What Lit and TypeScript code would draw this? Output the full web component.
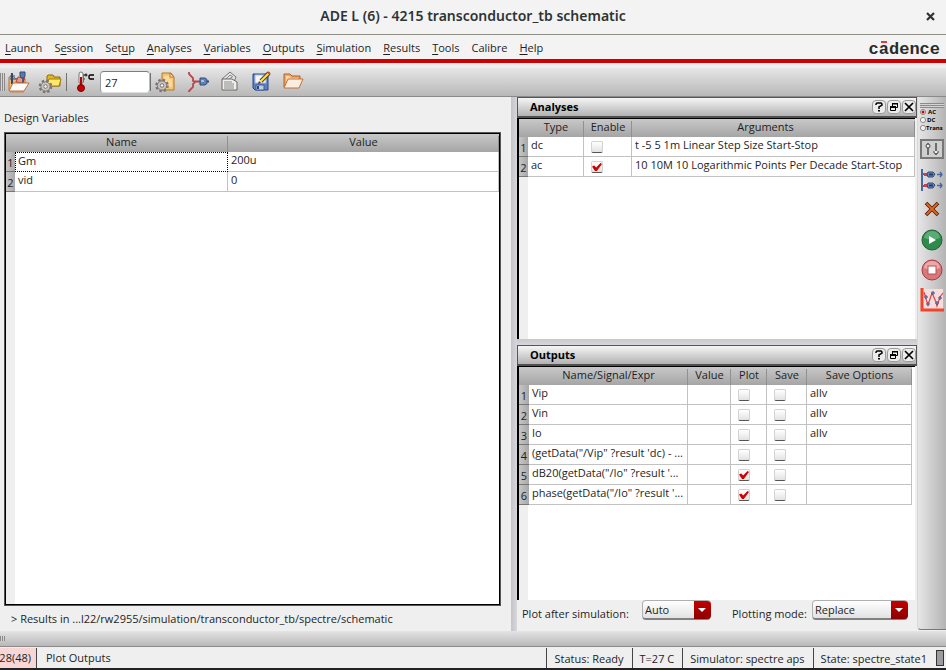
import { LitElement, html, css, svg, nothing } from "lit";
import { customElement } from "lit/decorators.js";

interface Analysis {
  type: string;
  enabled: boolean;
  args: string;
}

interface Output {
  name: string;
  plot: boolean;
  save: boolean;
  options: string;
}

const menus: [string, string, string][] = [
  ["", "L", "aunch"],
  ["S", "e", "ssion"],
  ["Set", "u", "p"],
  ["", "A", "nalyses"],
  ["", "V", "ariables"],
  ["", "O", "utputs"],
  ["", "S", "imulation"],
  ["", "R", "esults"],
  ["", "T", "ools"],
  ["Calibre", "", ""],
  ["", "H", "elp"],
];

const variables = [
  { name: "Gm", value: "200u" },
  { name: "vid", value: "0" },
];

const analyses: Analysis[] = [
  { type: "dc", enabled: false, args: "t -5 5 1m Linear Step Size Start-Stop" },
  { type: "ac", enabled: true, args: "10 10M 10 Logarithmic Points Per Decade Start-Stop" },
];

const outputs: Output[] = [
  { name: "Vip", plot: false, save: false, options: "allv" },
  { name: "Vin", plot: false, save: false, options: "allv" },
  { name: "Io", plot: false, save: false, options: "allv" },
  { name: "(getData(\"/Vip\" ?result 'dc) - ...", plot: false, save: false, options: "" },
  { name: "dB20(getData(\"/Io\" ?result '...", plot: true, save: false, options: "" },
  { name: "phase(getData(\"/Io\" ?result '...", plot: true, save: false, options: "" },
];

const gear = (x: number, y: number) => svg`
  <g transform="translate(${x} ${y})">
    <circle r="5.6" fill="none" stroke="#7b7572" stroke-width="2.4" stroke-dasharray="2.4 2"/>
    <circle r="4.6" fill="#c9c5c2" stroke="#7b7572" stroke-width="1"/>
    <circle r="1.8" fill="#f2f2f2" stroke="#7b7572" stroke-width="1"/>
  </g>`;

const icons = {
  session: svg`
    <path d="M3 20V7h5l2 2h9v4" fill="#f2b878" stroke="#b8703a"/>
    <path d="M6 3v11" stroke="#2e4a78" stroke-width="2"/>
    <path d="M4 6h5M4 9h5M9 9h10" stroke="#2e4a78" stroke-width="1"/>
    <path d="M12 7l-2 5 6 1 3-5z" fill="#e89a86" stroke="#b04a40"/>
    <path d="M14 2h5v4l-1 2h-3l-1-2z" fill="#5878a8" stroke="#2e4a78"/>
    <path d="M17 8v5" stroke="#2e4a78" stroke-width="1.5"/>
    <path d="M3 21l4-8h16l-5 8z" fill="#fbfbfa" stroke="#b8703a"/>
    <path d="M4 22h14" stroke="#c98044"/>`,
  folderGear: svg`
    <path d="M9 15V6l1-1h5l1 2h6v9H9z" fill="#e6b820" stroke="#8d6a0c"/>
    <path d="M8 16l3-7h12l-2 7z" fill="#ffe96a" stroke="#a27a10"/>
    ${gear(7.5, 16.5)}`,
  pageGear: svg`
    <path d="M8 3h9l3 4v13H8z" fill="#f7c470" stroke="#b9742c"/>
    <path d="M16 3v4h4z" fill="#fff1d0" stroke="#b9742c"/>
    <path d="M10 6h5v3h3v8h-8z" fill="#fbd998"/>
    ${gear(8, 15.5)}`,
  branch: svg`
    <path d="M3 2v2l4 4v3l2 1-2 2v3l-4 4v1M8 11.5h6" fill="none" stroke="#b8474a" stroke-width="1.8"/>
    <path d="M14 8h5l2 1.500v4l-2 1.500h-5z" fill="#5f82b8" stroke="#2e4a78"/>
    <path d="M15 10h3v2h-3z" fill="#a8c0e0"/>
    <path d="M21 11.500h2" stroke="#2e4a78" stroke-width="2"/>`,
  papers: svg`
    <path d="M4 9l8-7 6 5-2 5z" fill="#e2e2e0" stroke="#777"/>
    <path d="M8 9l4-4 3 2M10 10l4-3" fill="none" stroke="#888"/>
    <path d="M4 9h10l5 3v8H4z" fill="#eeeeec" stroke="#686866"/>
    <path d="M6 12h8M6 14h10M6 16h10M6 18h10" stroke="#8a8a88"/>`,
  save: svg`
    <path d="M3 4h15v16H5l-2-2z" fill="#5b82c4" stroke="#24468a"/>
    <path d="M5 5h11v8H5z" fill="#f4f6fa" stroke="#a8b8d8"/>
    <path d="M6 15h8v5H6z" fill="#c9cdd4" stroke="#3a5a96"/>
    <path d="M7 16h2v3H7z" fill="#24468a"/>
    <path d="M19 3l-8 8" stroke="#40342a" stroke-width="4"/>
    <path d="M18.500 3.500l-8 8" stroke="#ffd840" stroke-width="2.4"/>
    <path d="M18 2l2 2" stroke="#d0483c" stroke-width="2"/>
    <path d="M8 14l1-3 2 2z" fill="#40342a"/>`,
  open: svg`
    <path d="M2 17V4h6l2 2h8v4" fill="#f0a860" stroke="#b0602c"/>
    <path d="M4 6h3l2 2h7v3H4z" fill="#ffd9a8"/>
    <path d="M2 18l4-9h15l-4 9z" fill="#fbeee0" stroke="#c07038"/>`,
  thermometer: svg`
    <path d="M4 4a2 2 0 014 0v9H4z" fill="#f4f4f4" stroke="#777"/>
    <path d="M8 5h2M8 7h1M8 9h2M8 11h1" stroke="#333"/>
    <path d="M6 7v9" stroke="#b80000" stroke-width="2"/>
    <circle cx="6" cy="18" r="3.5" fill="#c60000" stroke="#7a0000"/>
    <circle cx="11" cy="5" r="1" fill="none" stroke="#000"/>
    <path d="M19 5h-4l-1 1v2l1 1h4" fill="none" stroke="#000" stroke-width="1.4"/>`,
  sliders: svg`
    <rect x="1" y="2" width="22" height="18" fill="#cfcfcf" stroke="#777" stroke-width="2"/>
    <path d="M8 5v12M16 5v12" stroke="#444" stroke-width="1.4"/>
    <circle cx="8" cy="8" r="2" fill="#eee" stroke="#444"/>
    <path d="M14 13v2l2 1 2-1v-2" fill="#eee" stroke="#444"/>`,
  nets: svg`
    <path d="M2 1v22M2 6h4M2 18h4" stroke="#4668a0" stroke-width="2"/>
    <path d="M4 5h3v3H4zM4 16h3v3H4z" fill="#d04048"/>
    <path d="M8 4h5l2 2-2 3H8L7 6zM8 15h5l2 2-2 3H8l-1-3z" fill="#6688bc" stroke="#2e4a78"/>
    <path d="M9 6.500h4M9 17.500h4" stroke="#223a64" stroke-width="2"/>
    <path d="M17 6.500h5M20 4l2 2.500-2 2.500M17 17.500h5M20 15l2 2.500-2 2.500" fill="none" stroke="#4668a0" stroke-width="1.4"/>`,
  remove: svg`
    <path d="M6 5l12 12M18 5L6 17" stroke="#4a1c08" stroke-width="3.6"/>
    <path d="M6.500 5.500l11 11M17.500 5.500l-11 11" stroke="#e0641c" stroke-width="2"/>`,
  run: svg`
    <circle cx="12" cy="12" r="10" fill="#2f8a4c" stroke="#1d5f34"/>
    <path d="M4 10a8 7 0 0116 0q-8 3-16 0z" fill="#6fb886" opacity="0.7"/>
    <path d="M9 8l7 4-7 4z" fill="#fff"/>`,
  stop: svg`
    <circle cx="12" cy="12" r="10" fill="#d8787c" stroke="#a83a40"/>
    <path d="M4 10a8 7 0 0116 0q-8 3-16 0z" fill="#f0b4b4" opacity="0.8"/>
    <rect x="8" y="8" width="8" height="8" fill="#fff" stroke="#b85056"/>`,
  plot: svg`
    <rect x="3" y="1" width="20" height="20" fill="#f8dcdc"/>
    <path d="M2 0v22h22" fill="none" stroke="#f0452c" stroke-width="3"/>
    <path d="M4 4l2 7 2 6 4-12 4 9 1 4 3-9 3-4" fill="none" stroke="#d8484c" stroke-width="1.2"/>
    <path d="M5 8h2v2H5zM7 15h2v2H7zM12 4h2v2h-2zM16 14h2v2h-2zM19 9h2v2h-2z" fill="#dfe8f8" stroke="#304c88"/>`,
};

const icon = (body: unknown) =>
  html`<svg class="icon" viewBox="0 0 24 24" fill="none" aria-hidden="true">${body}</svg>`;

@customElement("app-root")
export class AppRoot extends LitElement {
  static styles = css`
    :host {
      display: flex;
      flex-direction: column;
      min-height: 100vh;
      box-sizing: border-box;
      background: #efefef;
      color: #1e1e1e;
      font: 11px/16px "Open Sans", "Noto Sans", sans-serif;
      border-bottom: 2px solid #222;
      overflow: hidden;
    }
    *, *::before, *::after { box-sizing: border-box; }
    button, input, select { font: inherit; color: inherit; margin: 0; padding: 0; border: 0; background: none; }

    .titlebar {
      display: grid;
      grid-template-columns: 32px 1fr 32px;
      align-items: center;
      height: 35px;
      padding-bottom: 2px;
      background: #f3f3f3;
      border-bottom: 1px solid #8f8f84;
      color: #2e3436;
    }
    .title { grid-column: 2; margin: 0; text-align: center; font: 600 14px/20px "Noto Sans", sans-serif; white-space: nowrap; }
    .close { height: 20px; }
    .close svg, .dock-button svg { display: block; margin: auto; }

    .menubar {
      display: flex;
      align-items: center;
      height: 28px;
      padding: 2px 6px 0 5px;
      background: #f3f3f3;
      border-bottom: 4px solid #d10000;
    }
    .menus { display: flex; gap: 12px; flex: 1; }
    .menu { line-height: 16px; white-space: nowrap; }
    .menu u { text-underline-offset: 2px; }
    .logo { position: relative; padding-top: 4px; font: bold 17px/20px "Liberation Mono", monospace; color: #2b2b2b; }
    .logo::before { content: ""; position: absolute; left: 12px; top: 5px; width: 6px; height: 2px; background: #e2393f; }

    .toolbar {
      display: flex;
      align-items: center;
      height: 29px;
      margin-top: 5px;
      background: linear-gradient(#e6e6e6, #b8b8b8);
      border-bottom: 1px solid #8a8a8a;
    }
    .grip { width: 6px; height: 18px; background: repeating-linear-gradient(90deg, #8a8a8a 0 1px, #d4d4d4 1px 2px); border-right: 1px solid transparent; background-clip: padding-box; }
    .tools { display: flex; gap: 8px; }
    .tool { width: 24px; height: 24px; }
    .icon { display: block; width: 24px; height: 24px; }
    .separator { width: 1px; height: 18px; margin: 0 4px; background: #707070; }
    .after-field { margin: 0 3px 0 0; }
    .temperature { display: flex; align-items: center; gap: 1px; margin-left: 4px; }
    .temperature input {
      width: 50px;
      height: 22px;
      padding: 0 4px;
      background: #fff;
      border: 1px solid #8c8c8c;
      border-color: #7d7d7d #bbb #ddd #9a9a9a;
      border-radius: 4px;
    }

    .body { flex: 1; display: grid; grid-template-columns: minmax(0, 511fr) 6px minmax(0, 400fr) 29px; }
    .splitter-v { background: linear-gradient(90deg, #c4c4c8, #d8d8dc); }
    .splitter-h { height: 6px; background: linear-gradient(#c8c8cc, #d8d8dc); }

    .design { display: flex; flex-direction: column; padding: 13px 10px 4px 4px; }
    .heading { margin: 0 0 6px; font: inherit; }
    .variables { flex: 1; border: 2px solid #000; outline: 1px solid #555; outline-offset: -1px; background: linear-gradient(90deg, #efefef 9px, #fff 9px); }
    .results { margin: 0; padding: 5px 7px 0; line-height: 16px; }

    .docks { display: flex; flex-direction: column; min-width: 0; }
    .dock { display: flex; flex-direction: column; min-height: 0; }
    .dock-analyses { flex: 242 0 0; }
    .dock-outputs { flex: 255 0 0; }
    .dock-bar {
      display: flex;
      align-items: center;
      gap: 1px;
      height: 21px;
      padding: 0 0 1px 12px;
      background: linear-gradient(#f6f6f6, #b2b2b2);
      border: 1px solid #555;
      border-bottom: 2px solid #505050;
    }
    .dock-title { flex: 1; margin: 0; padding-top: 1px; font: bold 11px/16px "Open Sans", sans-serif; color: #000; }
    .dock-button { width: 14px; height: 14px; border: 1px solid #9a9a9a; border-radius: 4px; background: #ececec; }
    .dock-body { flex: 1; margin-right: 2px; border: solid #000; border-width: 1px 0 0 2px; background: linear-gradient(90deg, #efefef 9px, #fff 9px); }

    table { width: 100%; table-layout: fixed; border-collapse: separate; border-spacing: 0; }
    th, td { height: 20px; padding: 0; font-weight: normal; white-space: nowrap; overflow: hidden; }
    thead th { height: 18px; padding-bottom: 2px; text-align: center; line-height: 16px; background: linear-gradient(90deg, #b0b0b0, #707070) right 2px / 1px 16px no-repeat, linear-gradient(#c8c8c8, #a5a5a5); }
    thead th:first-child { background: linear-gradient(#c8c8c8, #a5a5a5); }
    tbody th { border-bottom: 1px solid #777; background: linear-gradient(90deg, #c6c6c6, #a8a8a8); text-align: center; line-height: 16px; padding-top: 3px; }
    td { padding: 0 0 3px 3px; border-right: 1px solid #c2c2c2; border-bottom: 1px solid #c2c2c2; background: #fff; line-height: 16px; }
    .current { border: 1px dotted #000; padding: 0 0 2px 2px; }
    .tick-cell { padding: 1px 0 0 7px; line-height: 0; }
    .number { width: 9px; }
    .number-wide { width: 10px; }
    .variable-name { width: 213px; }
    .type { width: 56px; }
    .enable { width: 48px; }
    .expression { width: 159px; }
    .value { width: 43px; }
    .plot-column { width: 36px; }
    .save-column { width: 40px; }
    .outputs-table { width: calc(100% - 3px); }
    thead .arguments { padding-right: 16px; }

    .tick {
      appearance: none;
      display: inline-grid;
      place-items: center;
      vertical-align: middle;
      width: 12px;
      height: 12px;
      background: linear-gradient(#fff, #e2e2e2);
      border: 1px solid #d2d2d2;
      border-bottom-color: #555;
      border-radius: 2px;
    }
    .tick:checked::before { content: ""; width: 10px; height: 8px; background: #d20000; clip-path: polygon(0 45%, 22% 30%, 42% 55%, 85% 0, 100% 12%, 48% 100%, 30% 100%); }

    .options { display: grid; grid-template-columns: 106px 83px 1fr 80px 96px; align-items: start; height: 31px; padding: 0 9px 0 5px; }
    .options label { padding-top: 6px; white-space: nowrap; }
    .combo { position: relative; display: block; }
    .combo-auto { margin-left: 14px; }
    .combo select { appearance: none; display: block; width: 100%; height: 20px; padding: 0 20px 0 2px; background: linear-gradient(#fff, #e2e2e2); border: 1px solid #b0b0b0; border-bottom: 2px solid #808080; border-radius: 4px; }
    .combo::after { content: ""; position: absolute; right: 0; top: 1px; width: 17px; height: 18px; border-radius: 0 4px 4px 0; background: linear-gradient(#c40000, #8a0000); pointer-events: none; }
    .combo::before { content: ""; position: absolute; z-index: 1; right: 5px; top: 8px; border: 4px solid transparent; border-top-color: #fff; border-bottom-width: 0; pointer-events: none; }

    .sidebar { display: flex; flex-direction: column; align-items: center; padding: 6px 1px 0 0; background: linear-gradient(90deg, #e6e6e6, #b4b4b4); border-left: 1px solid #d8d8d8; border-bottom: 1px solid #777; border-radius: 0 0 0 4px; margin-bottom: 1px; }
    .side-grip { width: 24px; height: 5px; background: repeating-linear-gradient(#8a8a8a 0 1px, #d4d4d4 1px 2px); }
    .side-tools { display: flex; flex-direction: column; gap: 6px; }
    .analysis-icon { display: block; width: 24px; height: 24px; font: bold 6px "Open Sans", sans-serif; }

    .lower-toolbar { height: 16px; background: linear-gradient(#e4e4e4, #b8b8b8); border-bottom: 1px solid #8a8a8a; padding-top: 5px; }
    .lower-grip { width: 5px; height: 5px; background: repeating-linear-gradient(90deg, #8a8a8a 0 1px, #d4d4d4 1px 2px); }

    .statusbar { display: flex; align-items: stretch; height: 21px; padding-top: 1px; line-height: 20px; white-space: nowrap; }
    .count { width: 37px; padding-right: 5px; display: flex; justify-content: flex-end; background: #f8d6d6; border-right: 1px solid #444; }
    .message { flex: 1; padding-left: 9px; }
    .cell { padding: 1px 8px 0 7px; border-left: 1px solid #444; line-height: 19px; }
    .indicator { width: 8px; margin: 2px 2px 2px 1px; background: #9c9ca0; border: 1px solid #333; }
  `;

  private tick(label: string, checked: boolean) {
    return html`<td class="tick-cell"><input class="tick" type="checkbox" aria-label=${label} .checked=${checked}></td>`;
  }

  private dockBar(title: string) {
    return html`<header class="dock-bar">
      <h2 class="dock-title">${title}</h2>
      <button class="dock-button" aria-label="Help for ${title}">
        <svg width="10" height="10" viewBox="0 0 10 10" fill="none"><path d="M2 3V2l1-1h4l1 1v1L5 5v2" stroke="#000" stroke-width="1.5"/><path d="M4 8h2v1.500H4z" fill="#000"/></svg>
      </button>
      <button class="dock-button" aria-label="Float ${title}">
        <svg width="10" height="10" viewBox="0 0 10 10" fill="none"><path d="M3.500 4V1.500h5v4H7M1.500 4.500h5v4h-5z" stroke="#000"/><path d="M3 1h6v1.500H3zM1 4h6v2H1z" fill="#000"/></svg>
      </button>
      <button class="dock-button" aria-label="Close ${title}">
        <svg width="10" height="10" viewBox="0 0 10 10"><path d="M1 1l8 8M9 1L1 9" stroke="#000" stroke-width="1.7"/></svg>
      </button>
    </header>`;
  }

  private toolButton(label: string, body: unknown) {
    return html`<button class="tool" aria-label=${label}>${icon(body)}</button>`;
  }

  render() {
    return html`
      <header class="titlebar">
        <h1 class="title">ADE L (6) - 4215 transconductor_tb schematic</h1>
        <button class="close" aria-label="Close window">
          <svg width="9" height="9" viewBox="0 0 9 9"><path d="M1 1l7 7M8 1L1 8" stroke="#2e3436" stroke-width="2.200"/></svg>
        </button>
      </header>

      <nav class="menubar">
        <div class="menus">
          ${menus.map(([before, key, after]) => html`<button class="menu">${before}${key ? html`<u>${key}</u>` : nothing}${after}</button>`)}
        </div>
        <span class="logo">cadence</span>
      </nav>

      <div class="toolbar">
        <span class="grip"></span>
        <div class="tools">
          ${this.toolButton("Load session", icons.session)}
          ${this.toolButton("Choose design", icons.folderGear)}
        </div>
        <span class="separator"></span>
        <label class="temperature">${icon(icons.thermometer)}<input type="text" aria-label="Temperature" .value=${"27"}></label>
        <span class="separator after-field"></span>
        <div class="tools">
          ${this.toolButton("Setup", icons.pageGear)}
          ${this.toolButton("Stimuli", icons.branch)}
          ${this.toolButton("Netlist", icons.papers)}
          ${this.toolButton("Save state", icons.save)}
          ${this.toolButton("Load state", icons.open)}
        </div>
      </div>

      <main class="body">
        <section class="design">
          <h2 class="heading">Design Variables</h2>
          <div class="variables">
            <table aria-label="Design Variables">
              <colgroup><col class="number"><col class="variable-name"><col></colgroup>
              <thead><tr><th></th><th>Name</th><th>Value</th></tr></thead>
              <tbody>
                ${variables.map((v, i) => html`<tr><th>${i + 1}</th><td class=${i === 0 ? "current" : "plain"}>${v.name}</td><td>${v.value}</td></tr>`)}
              </tbody>
            </table>
          </div>
          <p class="results">&gt; Results in ...l22/rw2955/simulation/transconductor_tb/spectre/schematic</p>
        </section>

        <div class="splitter-v"></div>

        <div class="docks">
          <section class="dock dock-analyses">
            ${this.dockBar("Analyses")}
            <div class="dock-body">
              <table aria-label="Analyses">
                <colgroup><col class="number"><col class="type"><col class="enable"><col></colgroup>
                <thead><tr><th></th><th>Type</th><th>Enable</th><th class="arguments">Arguments</th></tr></thead>
                <tbody>
                  ${analyses.map((a, i) => html`<tr><th>${i + 1}</th><td>${a.type}</td>${this.tick(`Enable ${a.type}`, a.enabled)}<td>${a.args}</td></tr>`)}
                </tbody>
              </table>
            </div>
          </section>

          <div class="splitter-h"></div>

          <section class="dock dock-outputs">
            ${this.dockBar("Outputs")}
            <div class="dock-body">
              <table class="outputs-table" aria-label="Outputs">
                <colgroup><col class="number-wide"><col class="expression"><col class="value"><col class="plot-column"><col class="save-column"><col></colgroup>
                <thead><tr><th></th><th>Name/Signal/Expr</th><th>Value</th><th>Plot</th><th>Save</th><th>Save Options</th></tr></thead>
                <tbody>
                  ${outputs.map((o, i) => html`<tr><th>${i + 1}</th><td>${o.name}</td><td></td>${this.tick(`Plot output ${i + 1}`, o.plot)}${this.tick(`Save output ${i + 1}`, o.save)}<td>${o.options}</td></tr>`)}
                </tbody>
              </table>
            </div>
          </section>

          <div class="options">
            <label for="plot-after">Plot after simulation:</label>
            <span class="combo combo-auto"><select id="plot-after"><option>Auto</option></select></span>
            <span></span>
            <label for="plot-mode">Plotting mode:</label>
            <span class="combo"><select id="plot-mode"><option>Replace</option></select></span>
          </div>
        </div>

        <aside class="sidebar">
          <span class="side-grip"></span>
          <div class="side-tools">
            <button class="tool" aria-label="Choose analyses">
              <svg class="analysis-icon" viewBox="0 0 24 24">
                <g fill="#f4f4f4" stroke="#8a8a8a"><circle cx="3" cy="4" r="2.600"/><circle cx="3" cy="12" r="2.600"/><circle cx="3" cy="20" r="2.600"/></g>
                <circle cx="3" cy="4" r="1.500" fill="#d00000"/>
                <g fill="#000"><text x="8" y="6">AC</text><text x="7" y="14">DC</text><text x="6" y="22">Trans</text></g>
              </svg>
            </button>
            ${this.toolButton("Edit variables", icons.sliders)}
            ${this.toolButton("Setup outputs", icons.nets)}
            ${this.toolButton("Delete", icons.remove)}
            ${this.toolButton("Run simulation", icons.run)}
            ${this.toolButton("Stop simulation", icons.stop)}
            ${this.toolButton("Plot outputs", icons.plot)}
          </div>
        </aside>
      </main>

      <div class="lower-toolbar"><div class="lower-grip"></div></div>

      <footer class="statusbar">
        <span class="count">28(48)</span>
        <span class="message">Plot Outputs</span>
        <span class="cell">Status: Ready</span>
        <span class="cell">T=27 C</span>
        <span class="cell">Simulator: spectre aps</span>
        <span class="cell">State: spectre_state1</span>
        <span class="indicator"></span>
      </footer>
    `;
  }
}
